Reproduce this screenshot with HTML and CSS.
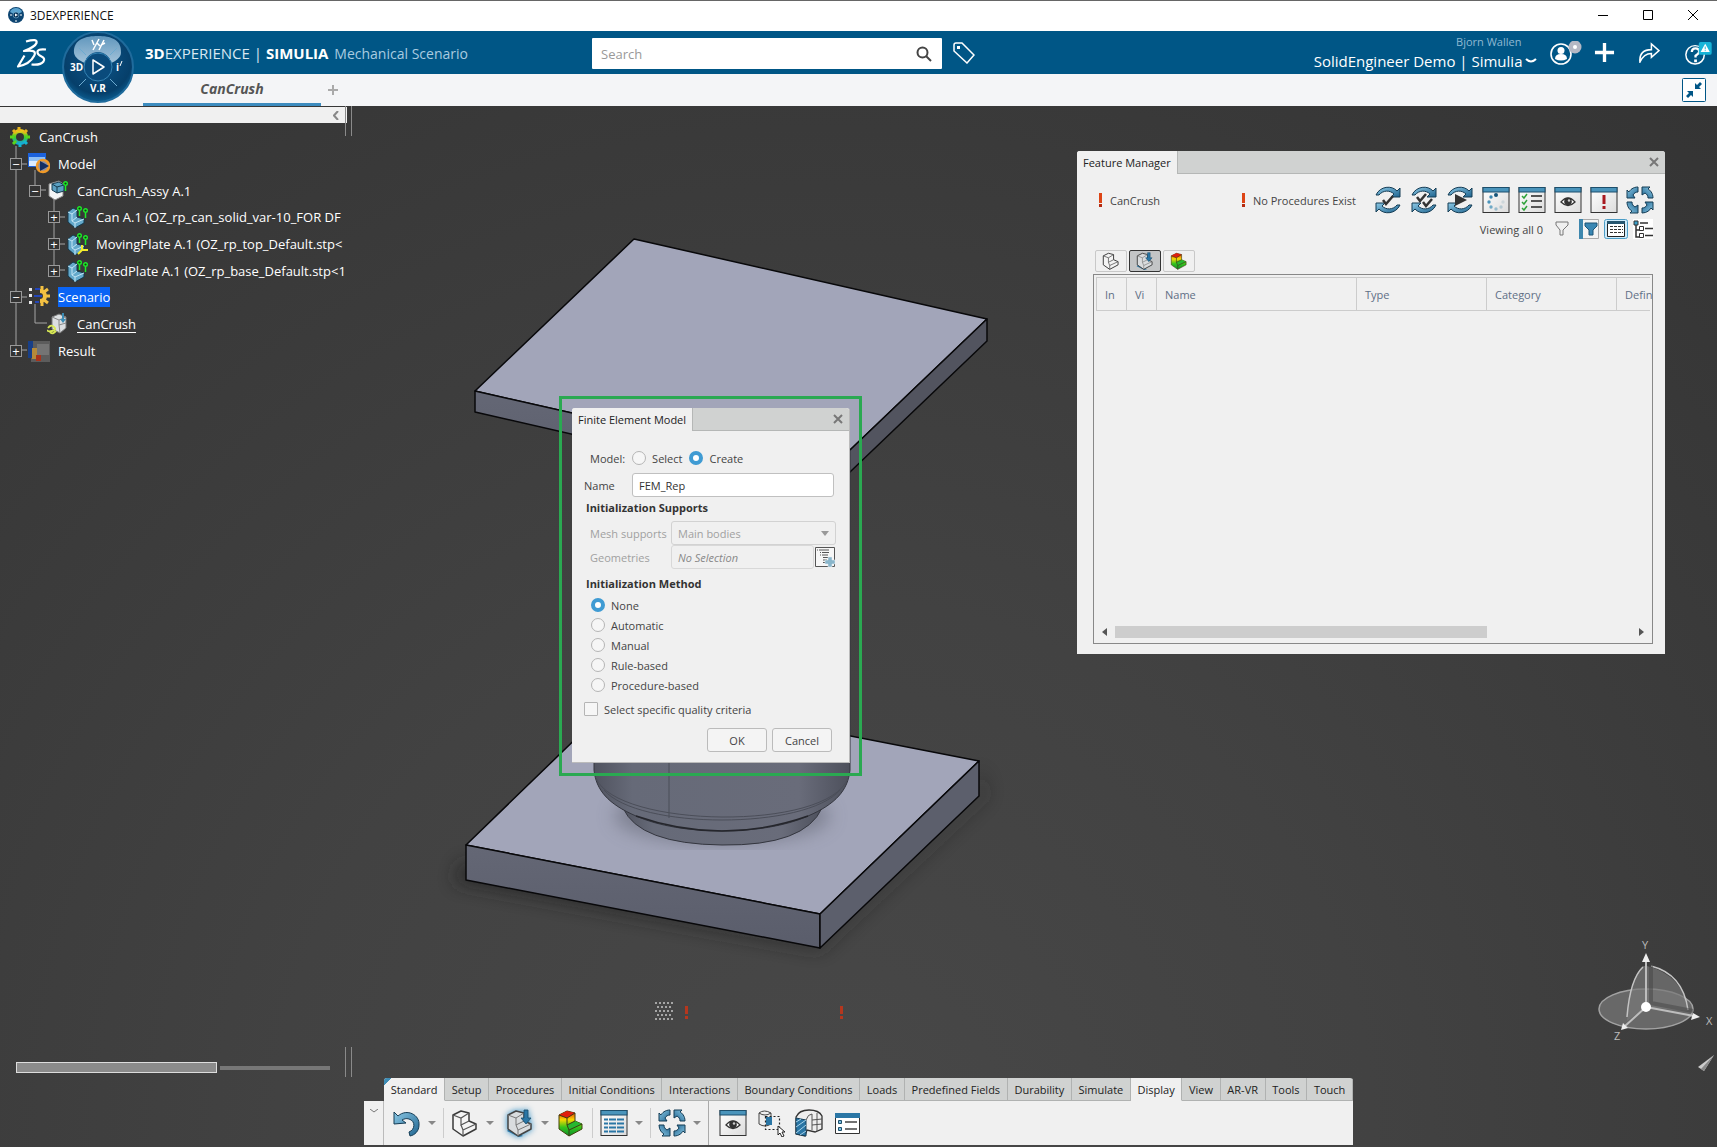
FILE: index.html
```html
<!DOCTYPE html>
<html lang="en">
<head>
    <meta charset="UTF-8">
    <title>3DEXPERIENCE</title>
    <meta name="viewport" content="width=device-width, initial-scale=1.0">
    <link rel="stylesheet" href="styles.css">
</head>
<body>
    <!-- shared icons -->
    <svg class="sprite" aria-hidden="true">
        <defs>
            <linearGradient id="blue" x1="0" y1="0" x2="1" y2="1">
                <stop offset="0" stop-color="#8cc9e6"/>
                <stop offset="1" stop-color="#1f648f"/>
            </linearGradient>
            <linearGradient id="rainbow" x1="0" y1="0" x2="0" y2="1">
                <stop offset="0" stop-color="#e81c0c"/>
                <stop offset=".35" stop-color="#f8d800"/>
                <stop offset=".65" stop-color="#35c41c"/>
                <stop offset="1" stop-color="#0b8f2c"/>
            </linearGradient>
            <linearGradient id="gear" x1="0" y1="0" x2="0" y2="1">
                <stop offset="0" stop-color="#f0c81a"/>
                <stop offset=".5" stop-color="#3fd024"/>
                <stop offset="1" stop-color="#15a5d8"/>
            </linearGradient>
            <linearGradient id="paper" x1="0" y1="0" x2="1" y2="1">
                <stop offset="0" stop-color="#fff"/>
                <stop offset="1" stop-color="#dcdcdc"/>
            </linearGradient>
        </defs>
        <symbol id="i-arcs" viewBox="0 0 28 28">
            <g fill="url(#blue)" stroke="#143c55" stroke-width="1">
                <path d="M2 9C6 0 18-1 23 5l3-3v9h-9l3-3C16 4 9 4 5 9z"/>
                <path d="M26 19c-4 9-16 10-21 4l-3 3v-9h9l-3 3c4 4 11 4 15-1z"/>
            </g>
        </symbol>
        <symbol id="i-cycle" viewBox="0 0 28 28">
            <g fill="url(#blue)" stroke="#143c55" stroke-width="1">
                <path d="M12 1C7 1 4 4 3 6L1 4v8h8L7 9c1-2 3-3 5-3z"/>
                <path d="M12 1C7 1 4 4 3 6L1 4v8h8L7 9c1-2 3-3 5-3z" transform="rotate(90 14 14)"/>
                <path d="M12 1C7 1 4 4 3 6L1 4v8h8L7 9c1-2 3-3 5-3z" transform="rotate(180 14 14)"/>
                <path d="M12 1C7 1 4 4 3 6L1 4v8h8L7 9c1-2 3-3 5-3z" transform="rotate(270 14 14)"/>
            </g>
        </symbol>
        <symbol id="i-window" viewBox="0 0 28 28">
            <rect x="1" y="1.500" width="26" height="25" fill="url(#paper)" stroke="#333"/>
            <rect x="1" y="1.500" width="26" height="4.500" fill="#4a94bb" stroke="#1d4f6c"/>
        </symbol>
        <symbol id="i-eye" viewBox="0 0 28 28">
            <use href="#i-window"/>
            <path d="M7 16q7-8 14 0q-7 7-14 0z" fill="#fff" stroke="#333" stroke-width="1.300"/>
            <circle cx="14" cy="15.500" r="3.800" fill="#333"/>
            <circle cx="15" cy="14.500" r="1.200" fill="#ccc"/>
        </symbol>
        <symbol id="i-part" viewBox="0 0 28 28">
            <path d="M2 6l8-4 8 2v8l7 3v5l-13 7-10-7z" fill="#f4f4f4" stroke="#3a3a3a" stroke-width="1.500" stroke-linejoin="round"/>
            <path d="M2 6l8 3 8-5M10 9v7l8-4M10 16l2 5 13-6M12 21v6" fill="none" stroke="#555" stroke-width="1.200"/>
        </symbol>
        <symbol id="i-load" viewBox="0 0 28 28">
            <path d="M1 22l3-3 13 8-4 1z" fill="#2a76a5"/>
            <path d="M2 6l8-4 8 2v8l7 3v5l-13 7-10-7z" fill="#d9dcde" stroke="#444" stroke-width="1.500" stroke-linejoin="round"/>
            <path d="M2 6l8 3 8-5M10 9v7l8-4M10 16l2 5 13-6M12 21v6" fill="none" stroke="#777" stroke-width="1"/>
            <path d="M18 1h4v8h3l-5 6-5-6h3z" fill="#2a76a5" stroke="#174b6b" stroke-width=".800"/>
        </symbol>
        <symbol id="i-result" viewBox="0 0 28 28">
            <path d="M2 6l8-4 8 2v8l7 3v5l-13 7-10-7z" fill="url(#rainbow)" stroke="#42420c" stroke-width="1" stroke-linejoin="round"/>
            <path d="M2 6l8-4 8 2-8 5z" fill="#e01d0d"/>
            <path d="M18 12l7 3-13 6-2-5z" fill="#26b830"/>
            <path d="M2 6l8 3 8-5M10 9v7l8-4M10 16l2 5 13-6M12 21v6" fill="none" stroke="#3b3b16" stroke-width="1"/>
        </symbol>
        <symbol id="i-solid" viewBox="0 0 22 22">
            <path d="M2 6l5-4 4 2v7l7 2v4l-9 5-7-6z" fill="#64a9cb" stroke="#15394c" stroke-width="1"/>
            <path d="M2 6l4 2 5-4M6 8v7l5-4M6 15l3 2 9-4M9 17v5" fill="none" stroke="#c4e6f5" stroke-width="1"/>
            <use href="#i-pin" x="11"/>
            <use href="#i-pin" x="17" y="2"/>
        </symbol>
        <symbol id="i-pin" viewBox="0 0 5 10" width="5" height="10">
            <circle cx="2.500" cy="2.500" r="1.800" fill="#123c12" stroke="#1eea2a" stroke-width="1.400"/>
            <path d="M2.500 5v5" stroke="#1eea2a" stroke-width="1.500"/>
        </symbol>
    </svg>

    <div class="app">
        <div class="titlebar">
            <svg class="app-icon" viewBox="0 0 16 16">
                <circle cx="8" cy="8" r="8" fill="#0c4471"/>
                <path d="M2 5a6.500 6.500 0 0 1 12 0q-6 4-12 0z" fill="#5ba3cf"/>
                <circle cx="8" cy="8" r="3" fill="#0a3459" stroke="#7fb8d8" stroke-width=".600"/>
                <path d="M7 6.500l3 1.500-3 1.500z" fill="#fff"/>
                <path d="M2 8h2m8 0h2M7 14h2" stroke="#fff"/>
            </svg>
            <span>3DEXPERIENCE</span>
            <div class="window-buttons">
                <button aria-label="Minimize"><svg viewBox="0 0 12 12"><path d="M1 6.500h10"/></svg></button>
                <button aria-label="Maximize"><svg viewBox="0 0 12 12"><path d="M1.500 1.500h9v9h-9z"/></svg></button>
                <button aria-label="Close"><svg viewBox="0 0 12 12"><path d="M1 1l10 10M11 1L1 11"/></svg></button>
            </div>
        </div>

        <header class="topbar">
            <svg class="logo" viewBox="0 0 32 30">
                <g fill="none" stroke="#fff" stroke-width="2.200" stroke-linejoin="round">
                    <path d="M10 3.500Q22 0 20.500 5 19 9 8 13 22 11 18 18 14 26 2 28.500L8.500 17.500"/>
                    <path d="M30 11.500q-9-1-8.500 3 0 2 4 4 4 2 2 5-3 4-12 3"/>
                </g>
            </svg>
            <button class="compass" aria-label="Compass">
                <svg viewBox="0 0 72 72">
                    <defs>
                        <radialGradient id="disc" cx=".5" cy=".4" r=".6">
                            <stop offset="0" stop-color="#0d568b"/>
                            <stop offset=".8" stop-color="#063f6a"/>
                            <stop offset="1" stop-color="#0b5c8f"/>
                        </radialGradient>
                        <linearGradient id="quad" x1="0" y1="0" x2="0" y2="1">
                            <stop offset="0" stop-color="#6197bd"/>
                            <stop offset="1" stop-color="#a3c3da"/>
                        </linearGradient>
                    </defs>
                    <circle cx="36" cy="36" r="35" fill="url(#disc)" stroke="#1f6b9c" stroke-width="2"/>
                    <path d="M12 22C11 8 24 5 36 5s24 3 23 17c0 5-7 9-10 10-1-7-7-11-13-11s-12 4-13 11c-5-2-10-5-11-10z" fill="url(#quad)"/>
                    <circle cx="36" cy="36" r="14" fill="#0a4b7c" stroke="#3583b4"/>
                    <path d="M31 29v14l11-7z" fill="none" stroke="#fff" stroke-width="1.500" stroke-linejoin="round"/>
                    <path d="M17 17l7 7M55 17l-7 7M17 55l7-7M55 55l-7-7" stroke="#6dabd0"/>
                    <path d="M30 9l2 5M37 8l-6 11M35 12l3 3M42 9l-5 10M39 14l4-2" fill="none" stroke="#fff" stroke-width="1.500"/>
                    <text x="8" y="40">3D</text>
                    <text x="28" y="61">V.R</text>
                    <text x="54" y="40">i</text>
                    <path d="M60 30l-2 5" stroke="#fff"/>
                </svg>
            </button>
            <h1 class="brand"><b>3D</b>EXPERIENCE | <b>SIMULIA</b> <span>Mechanical Scenario</span></h1>
            <form class="search">
                <input type="text" placeholder="Search" aria-label="Search">
                <button type="button" aria-label="Run search">
                    <svg viewBox="0 0 16 16"><circle cx="6.500" cy="6.500" r="5"/><path d="M10 10l5 5"/></svg>
                </button>
            </form>
            <button class="tag" aria-label="Tags">
                <svg viewBox="0 0 22 22"><path d="M1 3q0-2 2-2h6l12 12-7 8L1 9z"/><rect x="4" y="4" width="3" height="3"/></svg>
            </button>
            <div class="account">
                <small>Bjorn Wallen</small>
                <button>SolidEngineer Demo | Simulia
                    <svg viewBox="0 0 12 6"><path d="M1 1q5 5 10 0"/></svg>
                </button>
            </div>
            <div class="actions">
                <button aria-label="Profile">
                    <svg viewBox="0 0 32 24">
                        <circle cx="11" cy="13" r="10" fill="none" stroke="#fff" stroke-width="1.600"/>
                        <circle cx="11" cy="9.500" r="3.500" fill="#fff"/>
                        <path d="M5 18q0-5 6-5t6 5q-6 3-12 0z" fill="#fff"/>
                        <circle cx="25" cy="6" r="6.500" fill="#b4b8c4"/><circle cx="25" cy="6" r="2" fill="#fff"/>
                    </svg>
                </button>
                <button aria-label="Add"><svg viewBox="0 0 22 22"><path d="M11 1v20M1 11h20" stroke="#fff" stroke-width="3.500"/></svg></button>
                <button aria-label="Share"><svg viewBox="0 0 22 22"><path d="M1 21C0 12 5 8 13 8V2l8 7-8 7v-4Q5 12 1 21z" fill="none" stroke="#fff" stroke-width="1.600"/></svg></button>
                <button aria-label="Help">
                    <svg viewBox="0 0 32 26">
                        <circle cx="12" cy="15" r="10" fill="none" stroke="#fff" stroke-width="1.600"/>
                        <path d="M8.500 12q0-4 4-4t4 3.500q0 2-4 4.500v2" fill="none" stroke="#fff" stroke-width="2.500"/>
                        <path d="M11 20h3v3h-3z" fill="#fff"/>
                        <rect x="16" y="1" width="14" height="14" rx="2" fill="#17b4d8"/>
                        <path d="M23 3l5 9H18z" fill="#fff"/><path d="M23 6v3m0 1v1" stroke="#17b4d8"/>
                    </svg>
                </button>
            </div>
        </header>

        <nav class="tabbar">
            <a class="doc-tab" href="#">CanCrush</a>
            <button class="add-tab" aria-label="New tab"><svg viewBox="0 0 10 10"><path d="M5 0v10M0 5h10"/></svg></button>
            <button class="shrink" aria-label="Exit full screen">
                <svg viewBox="0 0 24 24">
                    <rect x=".5" y=".5" width="23" height="23" rx="1" fill="#fff" stroke="#005686"/>
                    <path d="M13 5v6h6l-2-2 3-3-2-2-3 3zM11 19v-6H5l2 2-3 3 2 2 3-3z" fill="#005686"/>
                </svg>
            </button>
        </nav>

        <main class="viewport">
            <!-- 3D scene -->
            <svg class="scene" viewBox="0 106 1717 1041" preserveAspectRatio="xMidYMid slice">
                <defs>
                    <linearGradient id="side" x1="0" y1="0" x2="0" y2="1">
                        <stop offset="0" stop-color="#646775"/>
                        <stop offset="1" stop-color="#5a5d6b"/>
                    </linearGradient>
                    <linearGradient id="can" x1="0" y1="0" x2="1" y2="0">
                        <stop offset="0" stop-color="#50535f"/>
                        <stop offset=".15" stop-color="#666a78"/>
                        <stop offset=".8" stop-color="#696c7a"/>
                        <stop offset="1" stop-color="#4d505c"/>
                    </linearGradient>
                    <filter id="soft"><feGaussianBlur stdDeviation="9"/></filter>
                </defs>
                <path d="M462 862l358 80 160-146v-30l6 30-166 154-366-68z" fill="#222" opacity=".7" filter="url(#soft)"/>
                <g stroke="#08080a" stroke-width="1.500" stroke-linejoin="round">
                    <path d="M634 239l353 80-159 152-353-80z" fill="#a2a5b9"/>
                    <path d="M475 391l353 80v22l-353-81z" fill="url(#side)"/>
                    <path d="M828 471l159-152v22L828 493z" fill="#52545f"/>
                    <path d="M624 692l355 69-159 153-354-69z" fill="#a2a5b9"/>
                    <path d="M466 845l354 69v34l-354-68z" fill="url(#side)"/>
                    <path d="M820 914l159-153v35L820 948z" fill="#5c5f6c"/>
                </g>
                <ellipse cx="722" cy="816" rx="108" ry="28" fill="#5c5f6c" opacity=".5" filter="url(#soft)"/>
                <path d="M623 808q16 36 99 37t100-37z" fill="url(#can)" stroke="#34363f"/>
                <path d="M594 450v320c2 20 14 34 42 46 44 20 128 20 172 0 28-12 40-26 42-46V450z" fill="url(#can)" stroke="#34363f"/>
                <path d="M596 778c20 50 232 54 252 0M604 790c34 40 202 40 236 0M669 760v58" fill="none" stroke="#4b4e59"/>
                <path d="M636 816q86 30 172 0" fill="none" stroke="#25262c" stroke-width="1.500"/>
                <path d="M655 1003h18M655 1011h18M655 1019h18" stroke="#a5a5a5" stroke-width="2" stroke-dasharray="2 2"/>
                <path d="M657 1007h16M657 1015h16" stroke="#a5a5a5" stroke-width="2" stroke-dasharray="2 2"/>
                <path d="M685 1006h3v8h-3zm0 10h3v3h-3zM840 1006h3v8h-3zm0 10h3v3h-3z" fill="#b5371e"/>
            </svg>

            <aside class="tree-panel">
                <div class="tree-head"><button aria-label="Collapse tree"><svg viewBox="0 0 6 9"><path d="M5 0L1 4.500 5 9"/></svg></button></div>
                <div class="tree">
                    <svg class="guides" viewBox="0 0 347 240">
                        <path d="M16 22v204M35 46v20M54 73v74M35 180v19h12M15 40h12M34 66h12M53 93h12M53 120h12M53 146h12M15 173h12M15 226h12"/>
                    </svg>
                    <div class="row root">
                        <svg viewBox="0 0 22 22">
                            <circle cx="11" cy="11" r="6" fill="none" stroke="url(#gear)" stroke-width="4"/>
                            <path d="M10 1v4M4 4l3 3M18 4l-3 3" stroke="#e8b51b" stroke-width="3"/>
                            <path d="M1 11h4M17 11h4M4 18l3-3" stroke="#58d51e" stroke-width="3"/>
                            <path d="M11 21v-4M18 18l-3-3" stroke="#15b5cf" stroke-width="3"/>
                        </svg>
                        <span>CanCrush</span>
                    </div>
                    <div class="row l1">
                        <button class="toggle" aria-label="Collapse">−</button>
                        <svg viewBox="0 0 22 22">
                            <path d="M0 0h18v14H0z" fill="#1c62dd"/><path d="M1 4h16v9H1z" fill="#8dbff5"/><path d="M1 8h16v5H1z" fill="#dcecff"/>
                            <circle cx="15" cy="13" r="6" fill="#8a8fa5" stroke="#f09a28" stroke-width="2.500"/>
                            <path d="M12 8l9 5-9 5z" fill="#132e63"/>
                        </svg>
                        <span>Model</span>
                    </div>
                    <div class="row l2">
                        <button class="toggle" aria-label="Collapse">−</button>
                        <svg viewBox="0 0 22 22">
                            <path d="M2 4l10-3 4 3v12l-8 4-6-4z" fill="#f3f5f6" stroke="#888"/>
                            <path d="M5 4l7-2 5 3v6l-7 2-5-3z" fill="#5ba0c2" stroke="#163a4e"/>
                            <path d="M5 4l5 3 7-2M10 7v6" fill="none" stroke="#163a4e"/>
                            <use href="#i-pin" x="16" y="1"/>
                        </svg>
                        <span>CanCrush_Assy A.1</span>
                    </div>
                    <div class="row l3">
                        <button class="toggle" aria-label="Expand">+</button>
                        <svg viewBox="0 0 22 22"><use href="#i-solid"/></svg>
                        <span>Can A.1 (OZ_rp_can_solid_var-10_FOR DF</span>
                    </div>
                    <div class="row l3">
                        <button class="toggle" aria-label="Expand">+</button>
                        <svg viewBox="0 0 22 22"><use href="#i-solid"/><path d="M12 21l4-4v-5M16 17h6" fill="none" stroke="#f5ec2b" stroke-width="2"/></svg>
                        <span>MovingPlate A.1 (OZ_rp_top_Default.stp&lt;</span>
                    </div>
                    <div class="row l3">
                        <button class="toggle" aria-label="Expand">+</button>
                        <svg viewBox="0 0 22 22"><use href="#i-solid"/></svg>
                        <span>FixedPlate A.1 (OZ_rp_base_Default.stp&lt;1</span>
                    </div>
                    <div class="row l1">
                        <button class="toggle" aria-label="Collapse">−</button>
                        <svg viewBox="0 0 22 22">
                            <path d="M1 2h3v3H1zM1 8h3v3H1zM1 15h3v3H1z" fill="#e8e8e8"/>
                            <path d="M7 3h5M6 10h8M7 16h4" stroke="#2446b8" stroke-width="2"/>
                            <path d="M12 5a5 5 0 1 1 0 10" fill="none" stroke="#f4c142" stroke-width="4"/>
                            <path d="M14 0v5M20 3l-4 3M22 10h-4M20 17l-4-3M14 20v-5" stroke="#f4c142" stroke-width="3"/>
                        </svg>
                        <span class="selected">Scenario</span>
                    </div>
                    <div class="row l2 leaf">
                        <svg viewBox="0 0 22 22">
                            <path d="M5 4l7-3 7 3v11l-6 5-8-4z" fill="#dcdfe1" stroke="#777"/>
                            <path d="M5 4l7 3 7-3M12 7v5l7-2M12 12l1 8" fill="none" stroke="#888"/>
                            <path d="M15 0v6h-2l3 4 3-4h-2V0z" fill="#3c8cb4"/>
                            <path d="M1 15q3-4 6-1t-2 4-4-1M9 18q-3 4-6 1" fill="none" stroke="#d9ea55" stroke-width="1.800"/>
                        </svg>
                        <a href="#">CanCrush</a>
                    </div>
                    <div class="row l1">
                        <button class="toggle" aria-label="Expand">+</button>
                        <svg viewBox="0 0 22 22">
                            <path d="M3 1h19v21H3z" fill="#5c5c5c"/><path d="M9 4h12v11H9z" fill="#747474"/>
                            <path d="M0 1h5v17H0z" fill="#183f88"/><path d="M4 8h5v11H4z" fill="#b58a3a"/><path d="M8 15h5v6H8z" fill="#a8331b"/>
                        </svg>
                        <span>Result</span>
                    </div>
                </div>
                <div class="tree-scroll"><i></i><b></b></div>
            </aside>

            <section class="window feature-manager">
                <div class="window-head">
                    <h2>Feature Manager</h2>
                    <button aria-label="Close"><svg viewBox="0 0 10 10"><path d="M1 1l8 8M9 1L1 9"/></svg></button>
                </div>
                <div class="status">
                    <p><i></i>CanCrush</p>
                    <p><i></i>No Procedures Exist</p>
                    <div class="tools">
                        <button aria-label="Update"><svg viewBox="0 0 28 28"><use href="#i-arcs"/><path d="M9 14l3 4 7-8" fill="none" stroke="#333" stroke-width="2.500"/></svg></button>
                        <button aria-label="Update all"><svg viewBox="0 0 28 28"><use href="#i-arcs"/><path d="M7 11l3 4 6-7M13 16l3 4 6-7" fill="none" stroke="#333" stroke-width="2.500"/></svg></button>
                        <button aria-label="Simulate"><svg viewBox="0 0 28 28"><use href="#i-arcs"/><path d="M9 8l12 6-12 6z" fill="#333"/></svg></button>
                        <button aria-label="Progress">
                            <svg viewBox="0 0 28 28">
                                <use href="#i-window"/>
                                <g fill="#6fa9c6">
                                    <circle cx="14" cy="9" r="2" fill="#17557a"/><circle cx="9" cy="11" r="1.700" fill="#3a86b0"/>
                                    <circle cx="7" cy="16" r="1.700" fill="#4a94bb"/><circle cx="9" cy="21" r="1.700"/>
                                    <circle cx="14" cy="23" r="1.700" fill="#9abccc"/><circle cx="19" cy="21" r="1.700" fill="#b5c9d2"/>
                                    <circle cx="21" cy="16" r="1.700" fill="#cdd6da"/>
                                </g>
                            </svg>
                        </button>
                        <button aria-label="Checklist"><svg viewBox="0 0 28 28"><use href="#i-window"/><path d="M4 10l2 2 3-4M4 16l2 2 3-4M4 22l2 2 3-4" fill="none" stroke="#2fa23a" stroke-width="1.500"/><path d="M13 10h11M13 15h11M13 21h11" stroke="#555" stroke-width="2"/></svg></button>
                        <button aria-label="Visibility"><svg viewBox="0 0 28 28"><use href="#i-eye"/></svg></button>
                        <button aria-label="Warnings"><svg viewBox="0 0 28 28"><use href="#i-window"/><path d="M12.500 9h3v9h-3zm0 11h3v3h-3z" fill="#a81920"/></svg></button>
                        <button aria-label="Refresh"><svg viewBox="0 0 28 28"><use href="#i-cycle"/></svg></button>
                    </div>
                </div>
                <div class="filters">
                    <span>Viewing all 0</span>
                    <button aria-label="Filter"><svg viewBox="0 0 24 20"><path d="M6 3h12v3l-5 5v5h-3v-5L6 6z" fill="none" stroke="#777"/></svg></button>
                    <button aria-label="Column filter"><svg viewBox="0 0 24 20"><path d="M2.500.5h19v19h-19z" fill="#f4f4f4" stroke="#aaa"/><path d="M2 0h4v20H2z" fill="#3e87ae"/><path d="M8 4h12v3l-4 4v5h-4v-5L8 7z" fill="#3a87b3" stroke="#1d5577"/></svg></button>
                    <button aria-label="Table view"><svg viewBox="0 0 24 20"><rect x=".5" y=".5" width="23" height="19" rx="2" fill="#cdeafa" stroke="#4b9cc6"/><path d="M3.500 2.500h17v15h-17z" fill="#fff" stroke="#222"/><path d="M3 2h18v3H3z" fill="#25556f"/><path d="M6 7.500h13M6 10.500h13M6 13.500h13" stroke="#333" stroke-dasharray="3 1"/></svg></button>
                    <button aria-label="Tree view"><svg viewBox="0 0 24 20"><path d="M2 0h20v20H2z" fill="#fff"/><path d="M5 5v13h4M5 11h4M9 4h8M14 9.500h8M14 16.500h8" fill="none" stroke="#333" stroke-width="1.500"/><path d="M3 2h4v4H3z" fill="#3a9ec8" stroke="#333"/><path d="M8.500 7.500h4v4h-4zM8.500 14.500h4v4h-4z" fill="#fff" stroke="#333"/></svg></button>
                </div>
                <div class="views">
                    <button aria-label="Model features"><svg viewBox="0 0 28 28"><use href="#i-part"/></svg></button>
                    <button class="on" aria-label="Scenario features"><svg viewBox="0 0 28 28"><use href="#i-load"/></svg></button>
                    <button aria-label="Result features"><svg viewBox="0 0 28 28"><use href="#i-result"/></svg></button>
                </div>
                <div class="grid">
                    <table>
                        <thead>
                            <tr><th class="c-small">In</th><th class="c-small">Vi</th><th class="c-name">Name</th><th class="c-mid">Type</th><th class="c-mid">Category</th><th class="c-last">Defin</th></tr>
                        </thead>
                    </table>
                    <div class="hscroll">
                        <svg viewBox="0 0 5 8"><path d="M5 0v8L0 4z"/></svg>
                        <div><i></i></div>
                        <svg viewBox="0 0 5 8"><path d="M0 0v8l5-4z"/></svg>
                    </div>
                </div>
            </section>

            <div class="highlight">
                <form class="window fem">
                    <div class="window-head">
                        <h2>Finite Element Model</h2>
                        <button type="button" aria-label="Close"><svg viewBox="0 0 10 10"><path d="M1 1l8 8M9 1L1 9"/></svg></button>
                    </div>
                    <div class="fem-body">
                        <div class="line model">
                            <span>Model:</span>
                            <label><input type="radio" name="model">Select</label>
                            <label><input type="radio" name="model" checked>Create</label>
                        </div>
                        <div class="line name">
                            <label for="name">Name</label>
                            <input type="text" id="name" value="FEM_Rep">
                        </div>
                        <h3>Initialization Supports</h3>
                        <div class="supports">
                            <div class="line support">
                                <label for="mesh">Mesh supports</label>
                                <div class="select"><select id="mesh" disabled><option>Main bodies</option></select></div>
                            </div>
                            <div class="line support">
                                <label for="geo">Geometries</label>
                                <input type="text" id="geo" value="No Selection" disabled>
                                <button type="button" aria-label="Selection list">
                                    <svg viewBox="0 0 20 20"><path d="M.5.5h19v19H.5z" fill="#f7f7f7" stroke="#555"/><path d="M2 3h1m1 0h10M5 5.500h1m1 0h7M5 8h1m1 0h6M8 10.500h5M8 13h4M8 15.500h4" stroke="#555"/><path d="M13 10h4v3h3v4h-3v3h-4v-3h-3v-4h3z" fill="#8ab6cb" stroke="#e8eef0" stroke-width=".500"/></svg>
                                </button>
                            </div>
                        </div>
                        <h3>Initialization Method</h3>
                        <div class="methods">
                            <label><input type="radio" name="method" checked>None</label>
                            <label><input type="radio" name="method">Automatic</label>
                            <label><input type="radio" name="method">Manual</label>
                            <label><input type="radio" name="method">Rule-based</label>
                            <label><input type="radio" name="method">Procedure-based</label>
                        </div>
                        <label class="criteria"><input type="checkbox">Select specific quality criteria</label>
                        <div class="buttons">
                            <button type="button">OK</button>
                            <button type="button">Cancel</button>
                        </div>
                    </div>
                </form>
            </div>

            <svg class="triad" viewBox="0 0 121 140">
                <ellipse cx="50" cy="70" rx="47" ry="20" fill="#686868" stroke="#a2a2a2" stroke-width="1.500"/>
                <path d="M50 68l-19 14Q34 38 47 27h4q36 9 41 45z" fill="#777" opacity=".7"/>
                <path d="M31 78Q34 40 47 28M55 27q32 8 37 44" fill="none" stroke="#c4c4c4" stroke-width="1.500"/>
                <path d="M55 24v40l42 8" fill="none" stroke="#444" stroke-width="4" opacity=".5"/>
                <path d="M50 68V20M50 68l48 9M50 68L29 87" stroke="#bdbdbd" stroke-width="2"/>
                <path d="M50 14l4 9h-8zM104 78l-9 3 2-7zM25 91l2-7 5 5z" fill="#eee"/>
                <circle cx="50" cy="68" r="5" fill="#fff"/>
                <text x="46" y="10">Y</text>
                <text x="110" y="86">X</text>
                <text x="18" y="101">Z</text>
                <path d="M118 116l-16 12 6 4z" fill="#ccc"/><path d="M118 116l-10 16-3-2z" fill="#888"/>
            </svg>

            <div class="action-bar">
                <div class="sections">
                    <button class="active first">Standard</button>
                    <button>Setup</button>
                    <button>Procedures</button>
                    <button>Initial Conditions</button>
                    <button>Interactions</button>
                    <button>Boundary Conditions</button>
                    <button>Loads</button>
                    <button>Predefined Fields</button>
                    <button>Durability</button>
                    <button>Simulate</button>
                    <button class="active">Display</button>
                    <button>View</button>
                    <button>AR-VR</button>
                    <button>Tools</button>
                    <button>Touch</button>
                </div>
                <div class="commands">
                    <button class="fold" aria-label="Collapse bar"><svg viewBox="0 0 8 4"><path d="M0 0l4 3 4-3"/></svg></button>
                    <button aria-label="Undo"><svg viewBox="0 0 28 28"><path d="M1 3l4 4C14-1 27 6 26 16c0 6-4 10-9 11l-1-4c6-2 7-11 0-13-3-1-5 0-7 1l4 3-12 1z" fill="url(#blue)" stroke="#143c55"/></svg></button>
                    <span class="caret"></span><span class="sep"></span>
                    <button aria-label="Model"><svg viewBox="0 0 28 28"><use href="#i-part"/></svg></button>
                    <span class="caret"></span>
                    <button class="glow" aria-label="Scenario"><svg viewBox="0 0 28 28"><use href="#i-load"/></svg></button>
                    <span class="caret"></span>
                    <button class="plain" aria-label="Results"><svg viewBox="0 0 28 28"><use href="#i-result"/></svg></button>
                    <span class="sep"></span>
                    <button aria-label="Feature Manager"><svg viewBox="0 0 28 28"><use href="#i-window"/><path d="M4 10.500h20M4 14.500h20M4 18.500h20M4 22.500h20" stroke="#2a76a5" stroke-width="2" stroke-dasharray="4 1 7 1 7 9"/></svg></button>
                    <span class="caret"></span><span class="sep"></span>
                    <button aria-label="Update"><svg viewBox="0 0 28 28"><use href="#i-cycle"/></svg></button>
                    <span class="caret"></span><span class="sep tall"></span>
                    <button class="view" aria-label="Visibility"><svg viewBox="0 0 28 28"><use href="#i-eye"/></svg></button>
                    <button class="view" aria-label="Select by box"><svg viewBox="0 0 28 28"><path d="M2 4q5-4 12 0v11q-6 4-12 0zM2 4q6 4 12 0" fill="#eee" stroke="#444"/><path d="M9 8h6v8H9z" fill="#2a76a5"/><path d="M8.500 7.500h14v13h-14z" fill="none" stroke="#222" stroke-width="1.200" stroke-dasharray="2 2"/><path d="M21 17v9l2-2 2 4 2-1-2-4h3z" fill="#fff" stroke="#222"/></svg></button>
                    <button class="view" aria-label="Section"><svg viewBox="0 0 28 28"><path d="M1 8Q4 1 14 1t13 6v13l-7 3-8-2-2 6-9-2z" fill="#eee" stroke="#333" stroke-width="1.300"/><path d="M1 9l10 2v16L1 25z" fill="#2a76a5" stroke="#173f58"/><path d="M1 18l10-7M1 24l10-8M5 26l6-4M1 13l5-3" stroke="#a9d4eb"/><path d="M11 11Q13 5 17 5v16M22 4v18M17 11l10-1M17 16l10-1" fill="none" stroke="#555"/></svg></button>
                    <button class="view" aria-label="Properties"><svg viewBox="0 0 28 28"><path d="M2.500 4.500h24v20h-24z" fill="#fff" stroke="#333"/><path d="M2 4h25v5H2z" fill="#2a76a5"/><path d="M5.500 11.500h3v3h-3zM5.500 18.500h3v3h-3z" fill="#7cc0e2" stroke="#1d4f6c"/><path d="M12 13h12M12 20h12" stroke="#444" stroke-width="1.500"/></svg></button>
                </div>
            </div>
        </main>
    </div>
</body>
</html>
```
FILE: styles.css
```css
* {
    box-sizing: border-box;
}
body {
    margin: 0;
    font-family: "Open Sans", "Noto Sans", sans-serif;
    font-size: 11px;
    color: #444;
    background-color: #3a3a3a;
}
button, input, select {
    font: inherit;
    color: inherit;
}
button {
    padding: 0;
    border: none;
    background: none;
    cursor: pointer;
}
svg {
    display: block;
}
h1, h2, h3, p {
    margin: 0;
    font-size: inherit;
    font-weight: normal;
}
.sprite {
    position: absolute;
    width: 0;
    height: 0;
}
.app {
    display: flex;
    flex-direction: column;
    height: 100vh;
    overflow: hidden;
}

/* Title bar */
.titlebar {
    display: flex;
    align-items: center;
    gap: 6px;
    height: 31px;
    padding: 0 8px 2px;
    background-color: #fff;
    border-top: 1px solid #666;
    font-size: 12px;
    color: #111;
}
.app-icon {
    width: 16px;
    height: 16px;
}
.window-buttons {
    display: flex;
    gap: 33px;
    margin-left: auto;
    padding-right: 10px;
}
.window-buttons svg {
    width: 12px;
    height: 12px;
    fill: none;
    stroke: #000;
}

/* Blue bar */
.topbar {
    display: flex;
    align-items: center;
    height: 43px;
    padding-left: 16px;
    background-color: #005686;
    color: #fff;
}
.logo {
    width: 32px;
    height: 30px;
}
.compass {
    position: relative;
    z-index: 2;
    align-self: flex-start;
    margin-left: 14px;
}
.compass svg {
    width: 72px;
    height: 72px;
}
.compass text {
    fill: #fff;
    font-size: 10px;
    font-weight: bold;
}
.brand {
    flex: 0 1 447px;
    margin-left: 11px;
    font-size: 15px;
    white-space: nowrap;
    color: #d8e8f2;
}
.brand b {
    color: #fff;
}
.brand span {
    margin-left: 2px;
    font-size: 14px;
    color: #a9cbe0;
}
.search {
    display: flex;
    flex: 0 1 350px;
    align-items: center;
    height: 31px;
    margin-top: 2px;
    padding-right: 10px;
    background-color: #fff;
    border-radius: 1px;
}
.search input {
    flex: 1;
    min-width: 0;
    padding: 0 9px;
    border: none;
    background: none;
    font-size: 13px;
    color: #333;
}
.search input::placeholder {
    color: #999;
}
.search svg {
    width: 16px;
    height: 16px;
    fill: none;
    stroke: #444;
    stroke-width: 2;
}
.tag {
    margin-left: 11px;
}
.tag svg {
    width: 22px;
    height: 22px;
    fill: none;
    stroke: #fff;
    stroke-width: 1.5;
}
.tag rect {
    fill: #fff;
    stroke: none;
}
.account {
    display: flex;
    flex-direction: column;
    align-items: flex-end;
    margin-left: auto;
    white-space: nowrap;
}
.account small {
    margin-right: 16px;
    padding-top: 2px;
    font-size: 11px;
    line-height: 14px;
    color: #8fb9d2;
}
.account button {
    display: flex;
    align-items: center;
    gap: 3px;
    font-size: 15px;
    line-height: 24px;
}
.account svg {
    width: 12px;
    height: 6px;
    fill: none;
    stroke: #fff;
    stroke-width: 2;
}
.actions {
    display: flex;
    align-items: center;
    gap: 24px;
    margin-left: 13px;
    padding-right: 3px;
}
.actions button:first-child {
    margin-right: -12px;
}
.actions svg {
    height: 24px;
}
.actions button:nth-child(2) svg,
.actions button:nth-child(3) svg {
    width: 21px;
    height: 21px;
}

/* Document tabs */
.tabbar {
    display: flex;
    align-items: center;
    height: 32px;
    padding: 0 11px 0 143px;
    background-color: #f4f5f7;
}
.doc-tab {
    width: 178px;
    height: 31px;
    border-bottom: 3px solid #3d8cbf;
    font-size: 14px;
    font-weight: bold;
    font-style: italic;
    line-height: 28px;
    text-align: center;
    text-decoration: none;
    color: #555;
}
.add-tab svg {
    width: 10px;
    height: 10px;
    margin-left: 7px;
    stroke: #aaa;
    stroke-width: 2;
}
.shrink {
    margin-left: auto;
}
.shrink svg {
    width: 24px;
    height: 24px;
}

/* 3D viewport */
.viewport {
    position: relative;
    flex: 1;
    min-height: 0;
    background: radial-gradient(circle at 48% 100%, #484848, #424242 40%, #343434 100%);
}
.scene {
    position: absolute;
    width: 100%;
    height: 100%;
}

/* Tree */
.tree-panel {
    position: relative;
    display: flex;
    flex-direction: column;
    width: 352px;
    height: 100%;
    padding: 1px 0 70px;
    color: #fff;
    font-size: 13px;
}
.tree-panel::before,
.tree-panel::after {
    content: "";
    position: absolute;
    right: 0;
    top: 0;
    width: 5px;
    height: 30px;
    border: solid #8a8a8a;
    border-width: 0 1px;
}
.tree-panel::after {
    top: auto;
    bottom: 70px;
}
.tree-head {
    display: flex;
    justify-content: flex-end;
    align-items: center;
    width: 347px;
    height: 16px;
    padding-right: 8px;
    background-color: #f0f0f0;
}
.tree-head svg {
    width: 6px;
    height: 9px;
    fill: none;
    stroke: #888;
    stroke-width: 2;
}
.tree {
    position: relative;
    display: grid;
    grid-auto-rows: 1fr;
    width: 347px;
    height: 240px;
    margin-top: 1px;
    overflow: hidden;
}
.guides {
    position: absolute;
    width: 347px;
    height: 240px;
    fill: none;
    stroke: #a5a5a5;
}
.row {
    position: relative;
    display: flex;
    align-items: center;
    min-width: 0;
    padding-left: 10px;
    white-space: nowrap;
}
.row.root {
    padding-left: 9px;
}
.row.l2 {
    padding-left: 29px;
}
.row.l3 {
    padding-left: 48px;
}
.row.leaf {
    padding-left: 47px;
}
.row svg {
    flex: none;
    width: 22px;
    height: 22px;
    margin-right: 8px;
}
.row a {
    color: #fff;
    text-underline-offset: 3px;
}
.toggle {
    display: flex;
    flex: none;
    justify-content: center;
    align-items: center;
    width: 12px;
    height: 12px;
    margin-right: 6px;
    border: 1px solid #999;
    background-color: #333;
    line-height: 10px;
}
.row .selected {
    background-color: #0a64f5;
    line-height: 20px;
}
.tree-scroll {
    display: flex;
    align-items: center;
    gap: 3px;
    margin: auto 22px 4px 16px;
}
.tree-scroll i {
    width: 201px;
    height: 11px;
    border: 1px solid #ddd;
    background-color: #8b8b8b;
}
.tree-scroll b {
    flex: 1;
    height: 4px;
    background-color: #777;
}

/* Floating windows */
.window {
    background-color: #f0f0f0;
    border-radius: 3px 3px 0 0;
}
.window-head {
    display: flex;
    justify-content: space-between;
    height: 23px;
    background-color: #d0d2d1;
    border-bottom: 1px solid #b5b7b6;
    border-radius: 3px 3px 0 0;
}
.window-head h2 {
    height: 23px;
    padding: 0 6px;
    background-color: #f0f0f0;
    border-right: 1px solid #b5b7b6;
    border-radius: 3px 0 0 0;
    line-height: 23px;
    color: #222;
}
.window-head button {
    padding: 0 6px;
}
.window-head svg {
    width: 10px;
    height: 10px;
    stroke: #777;
    stroke-width: 2;
}
.feature-manager {
    position: absolute;
    top: 45px;
    right: 52px;
    display: flex;
    flex-direction: column;
    width: 588px;
    height: 503px;
    padding-bottom: 10px;
}
.status {
    display: flex;
    align-items: center;
    margin: 12px 11px 0 22px;
}
.status p {
    display: flex;
    flex: none;
    align-items: center;
    gap: 8px;
    white-space: nowrap;
}
.status p:first-child {
    width: 143px;
}
.status i {
    width: 3px;
    height: 14px;
    background: linear-gradient(#dd4415 10px, transparent 10px, transparent 11px, #b52a10 11px);
}
.tools {
    display: flex;
    gap: 8px;
    margin-left: auto;
}
.tools svg {
    width: 28px;
    height: 28px;
}
.filters {
    display: flex;
    justify-content: flex-end;
    align-items: center;
    gap: 3px;
    height: 20px;
    margin: 5px 10px 0 0;
}
.filters span {
    margin-right: 4px;
}
.filters svg {
    width: 24px;
    height: 20px;
}
.views {
    display: flex;
    gap: 2px;
    margin: 11px 0 0 18px;
}
.views button {
    display: flex;
    justify-content: center;
    align-items: center;
    width: 32px;
    height: 22px;
    border: 1px solid #c8c8c8;
    border-radius: 2px;
}
.views .on {
    border-color: #333;
    background-color: #c3c5c6;
}
.views svg {
    width: 18px;
    height: 18px;
}
.grid {
    display: flex;
    flex: 1;
    flex-direction: column;
    justify-content: space-between;
    margin: 2px 12px 0 16px;
    padding: 2px;
    border: 1px solid #888;
}
.grid table {
    width: 100%;
    table-layout: fixed;
    border-collapse: collapse;
}
.grid th {
    height: 33px;
    padding: 0 8px;
    border: 1px solid #ccc;
    font-weight: normal;
    text-align: left;
    color: #5f6f86;
}
.c-small {
    width: 30px;
}
.c-name {
    width: 200px;
}
.c-mid {
    width: 130px;
}
.grid .c-last {
    padding-right: 0;
    border-right: none;
}
.hscroll {
    display: flex;
    align-items: center;
    gap: 8px;
    height: 18px;
    padding: 0 6px;
}
.hscroll svg {
    width: 5px;
    height: 8px;
    fill: #555;
}
.hscroll div {
    flex: 1;
}
.hscroll i {
    display: block;
    width: 72%;
    height: 12px;
    background-color: #cdcdcd;
}

/* Finite element model dialog */
.highlight {
    position: absolute;
    left: 559px;
    top: 290px;
    width: 303px;
    padding: 9px 9px 10px 10px;
    border: 3px solid #2aa951;
}
.fem {
    border: solid #bbb;
    border-width: 0 1px 1px 0;
}
.fem-body {
    padding: 15px 15px 10px 12px;
}
.line {
    display: flex;
    align-items: center;
    height: 24px;
}
.fem label {
    display: flex;
    align-items: center;
}
input[type="radio"],
input[type="checkbox"] {
    appearance: none;
    width: 14px;
    height: 14px;
    margin: 0 6px 0 0;
    border: 1px solid #b5b5b5;
    border-radius: 50%;
    background-color: #f6f6f6;
}
input[type="radio"]:checked {
    border: 4px solid #3f9bd3;
    background-color: #fff;
}
input[type="checkbox"] {
    border-radius: 1px;
}
.model {
    gap: 7px;
    padding-left: 6px;
}
.name {
    margin-top: 3px;
}
.name label {
    width: 48px;
}
.fem input[type="text"] {
    flex: 1;
    min-width: 0;
    height: 24px;
    padding: 0 6px;
    border: 1px solid #c0c0c0;
    border-radius: 3px;
    background-color: #fff;
    color: #333;
}
.fem h3 {
    padding-left: 2px;
    font-weight: bold;
    line-height: 22px;
    color: #333;
}
.supports {
    margin: 2px -2px 4px 0;
    padding-left: 6px;
    color: #a0a0a0;
}
.fem .support label {
    flex: none;
    width: 81px;
    white-space: nowrap;
}
.select {
    position: relative;
    flex: 1;
}
.select::after {
    content: "";
    position: absolute;
    top: 10px;
    right: 7px;
    border: solid transparent;
    border-width: 5px 4px 0;
    border-top-color: #999;
}
.fem select {
    appearance: none;
    width: 100%;
    height: 24px;
    padding: 0 6px;
    border: 1px solid #d2d2d2;
    border-radius: 3px;
    background-color: #f0f0f0;
    opacity: 1;
}
.fem .support input[type="text"] {
    border-color: #d8d8d8;
    background-color: #f0f0f0;
    font-style: italic;
    color: #888;
}
.support button {
    padding: 1px;
}
.support button svg {
    width: 20px;
    height: 20px;
}
.methods {
    padding-left: 7px;
}
.methods label {
    height: 20px;
}
.criteria {
    height: 28px;
}
.buttons {
    display: flex;
    justify-content: flex-end;
    gap: 5px;
    margin-top: 5px;
    padding-right: 2px;
}
.buttons button {
    width: 60px;
    height: 24px;
    border: 1px solid #bbb;
    border-radius: 3px;
    background-color: #f4f4f4;
}

/* Axis triad */
.triad {
    position: absolute;
    right: 0;
    bottom: 68px;
    width: 121px;
    height: 140px;
    overflow: visible;
}
.triad text {
    fill: #bbb;
    font-size: 11px;
}

/* Action bar */
.action-bar {
    position: absolute;
    left: 0;
    right: 0;
    bottom: 2px;
    width: 989px;
    margin: 0 auto;
}
.sections {
    display: flex;
    margin-left: 20px;
    border-radius: 3px 3px 0 0;
    overflow: hidden;
}
.sections button {
    flex: 1 0 auto;
    height: 23px;
    padding: 0 5px;
    border: solid #b0b2b1;
    border-width: 0 1px 1px 0;
    background-color: #d0d2d1;
    white-space: nowrap;
    color: #222;
}
.sections .active {
    background-color: #f0f0f0;
    border-bottom-color: #f0f0f0;
}
.sections .first {
    background-image: linear-gradient(135deg, #3d8cb5 5px, transparent 5px);
}
.commands {
    display: flex;
    align-items: center;
    height: 44px;
    background-color: #f0f0f0;
}
.commands svg {
    width: 28px;
    height: 28px;
}
.commands .fold {
    align-self: stretch;
    width: 20px;
    margin-right: 9px;
    padding-left: 6px;
    border-right: 1px solid #bbb;
}
.commands .fold svg {
    width: 8px;
    height: 4px;
    margin-bottom: 25px;
    fill: none;
    stroke: #777;
}
.caret {
    margin: 0 7px;
    border: solid transparent;
    border-width: 4px 4px 0;
    border-top-color: #888;
}
.sep {
    width: 1px;
    height: 30px;
    margin-right: 7px;
    background-color: #ccc;
}
.sep.tall {
    height: 44px;
    margin-right: 10px;
    background-color: #aaa;
}
.glow {
    margin-left: 5px;
    filter: drop-shadow(0 0 3px #2e8dc4);
}
.commands .plain {
    margin: 0 7px 0 1px;
}
.view {
    margin-right: 10px;
}
```
